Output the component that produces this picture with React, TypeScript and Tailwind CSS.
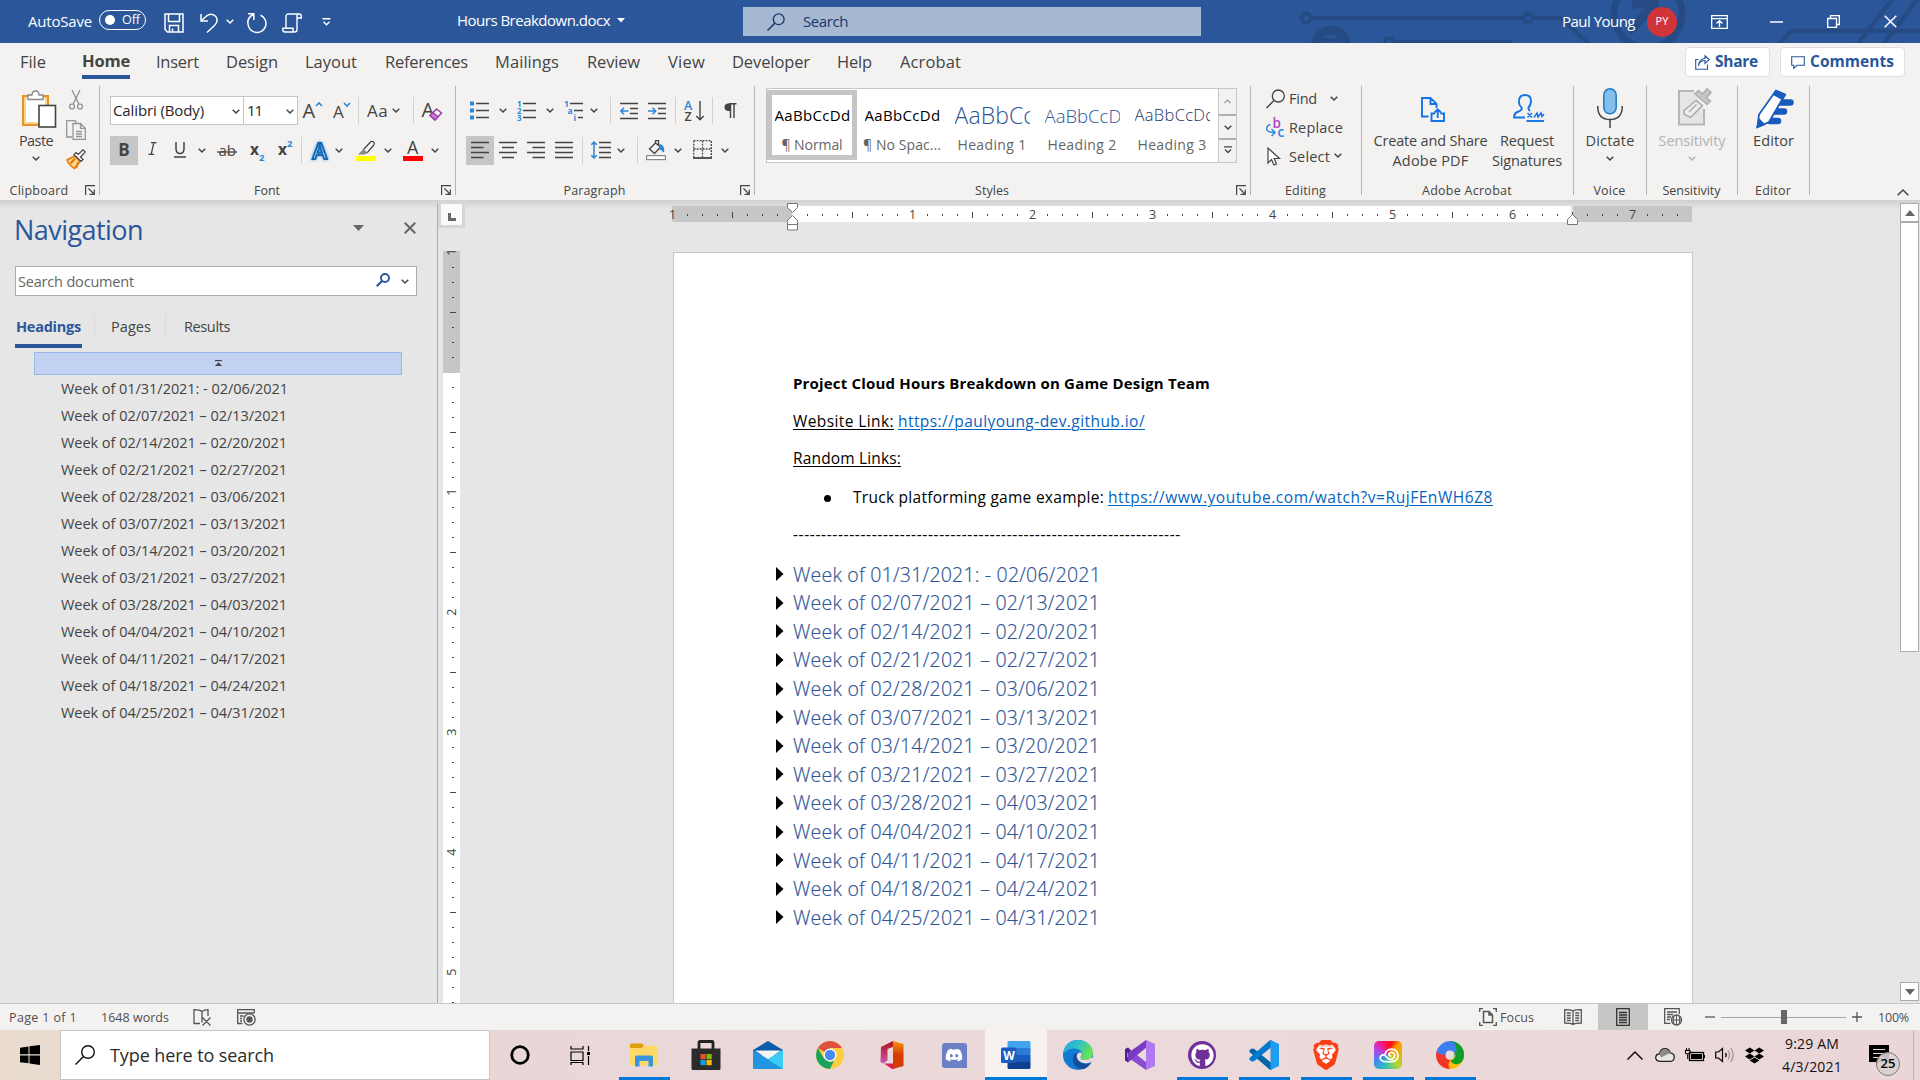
import React, { useLayoutEffect, useRef } from "react";
import { FaDiscord, FaDropbox, FaGithub } from "react-icons/fa";
import { SiBrave } from "react-icons/si";

/** Single-line text whose tracking is adjusted so that it fills `w` pixels. */
function T({ w, className = "", children }: { w: number; className?: string; children: string }) {
  const ref = useRef<HTMLSpanElement>(null);
  useLayoutEffect(() => {
    const el = ref.current;
    if (!el) return;
    el.style.letterSpacing = "0px";
    const natural = el.getBoundingClientRect().width;
    el.style.letterSpacing = `${(w - natural) / children.length}px`;
  }, [w, children]);
  return (
    <span ref={ref} className={`inline-block shrink-0 whitespace-pre ${className}`}>
      {children}
    </span>
  );
}

function Ic({
  w,
  h,
  className = "",
  children,
}: {
  w: number;
  h: number;
  className?: string;
  children: React.ReactNode;
}) {
  return (
    <svg
      width={w}
      height={h}
      viewBox={`0 0 ${w} ${h}`}
      fill="none"
      stroke="#444444"
      strokeWidth="1.3"
      className={`block shrink-0 overflow-visible ${className}`}
    >
      {children}
    </svg>
  );
}

const Chev = ({ className = "", color = "#444444" }: { className?: string; color?: string }) => (
  <Ic w={8} h={5} className={className}>
    <path d="M0.7 0.7L4 4L7.3 0.7" stroke={color} strokeWidth="1.5" />
  </Ic>
);

const Sep = () => <div className="h-[27px] w-px shrink-0 bg-[#d2d0ce]" />;

const Cell = ({ className = "", children }: { className?: string; children?: React.ReactNode }) => (
  <div className={`flex h-full shrink-0 items-center ${className}`}>{children}</div>
);

/* ---------- Title bar ---------- */

function Circuit() {
  return (
    <svg width="680" height="43" viewBox="1240 0 680 43" className="absolute right-0 top-0" fill="none" stroke="#264b84" strokeWidth="4">
      <circle cx="1306" cy="18" r="4.5" />
      <circle cx="1528" cy="18" r="4.5" />
      <path d="M1311 18H1523M1533 18H1560L1591 45" />
      <path d="M1316 45a15 15 0 0 1 30 0" strokeWidth="9" />
      <path d="M1322 40h18" strokeWidth="4" />
      <circle cx="1389" cy="42" r="4" />
      <path d="M1393 42H1512" />
      <circle cx="1648" cy="14" r="34" strokeWidth="7" />
      <path d="M1628 32L1652 8M1632 4h22v16" strokeWidth="9" />
      <path d="M1778 45L1791 31H1920M1857 45L1893 -2M1883 45L1918 -2" strokeWidth="4.5" />
    </svg>
  );
}

function TitleBar() {
  return (
    <header className="relative flex h-[43px] shrink-0 items-center overflow-hidden bg-[#2b579a] text-white">
      <Circuit />
      <div className="relative flex h-full w-full items-center">
        <Cell className="w-[99px] pl-7">
          <T w={64} className="text-[15px]">AutoSave</T>
        </Cell>
        <div className="mb-[3px] flex h-5 w-[47px] shrink-0 items-center rounded-full border border-white pl-[5px]">
          <div className="h-[10px] w-[10px] rounded-full bg-white" />
          <T w={18} className="ml-[7px] text-[12.5px]">Off</T>
        </div>
        <Ic w={20} h={20} className="ml-[18px] mt-[3px]">
          <path d="M1 1H19V19H3.5L1 16.5ZM4.5 1V8.5H15.5V1M5.5 19V12.5H14.5V19M8.5 15.5V19" stroke="#fff" strokeWidth="1.5" />
        </Ic>
        <Ic w={18} h={20} className="ml-4 mt-[3px]">
          <path d="M1 1V8H8M1.5 7.5L6.5 3C11 -0.8 17.5 2 17 8C16.8 10 16 11 14.5 12.5L7 19.5" stroke="#fff" strokeWidth="1.5" />
        </Ic>
        <Chev className="ml-2" color="#fff" />
        <Ic w={20} h={20} className="ml-[13px] mt-[3px]">
          <path d="M1 0.8H6.8V7M6.5 1.5C2 3.5 0.5 7.5 1 11A9 9 0 1 0 13.5 2.2" stroke="#fff" strokeWidth="1.5" />
        </Ic>
        <Ic w={20} h={20} className="ml-[15px] mt-[3px]">
          <path d="M4 15V3.5Q4 1 6.5 1H17Q19.3 1 19.3 3.3V5H15V16.5Q15 19 12.5 19H3Q0.8 19 0.8 16.5V15.3H11V17Q11 19 12.8 19M15 5V3Q15 1 17 1" stroke="#fff" strokeWidth="1.4" />
        </Ic>
        <Ic w={9} h={8} className="ml-[20px]">
          <path d="M0.5 0.8H8.5M1.5 3.8L4.5 6.8L7.5 3.8" stroke="#fff" strokeWidth="1.4" />
        </Ic>
        <T w={153} className="mb-[3px] ml-[126px] text-[15px]">Hours Breakdown.docx</T>
        <Ic w={8} h={5} className="mb-[3px] ml-[7px]">
          <path d="M0 0H8L4 4.5Z" fill="#fff" stroke="none" />
        </Ic>
        <div className="ml-[118px] flex h-[29px] w-[458px] shrink-0 items-center bg-[#a5b9d3] pl-6 text-[#1b3766]">
          <Ic w={18} h={18}>
            <circle cx="11.7" cy="6.3" r="5.4" stroke="#1b3766" />
            <path d="M7.8 10.2L0.5 17.5" stroke="#1b3766" strokeWidth="1.5" />
          </Ic>
          <T w={45} className="ml-[18px] text-[15px]">Search</T>
        </div>
        <T w={73} className="ml-[361px] text-[15px]">Paul Young</T>
        <div className="ml-[12px] flex h-[30px] w-[30px] shrink-0 items-center justify-center rounded-full bg-[#d13438] text-[11px]">PY</div>
        <Ic w={17} h={14} className="ml-[34px]">
          <path d="M0.7 0.7H16.3V13.3H0.7ZM0.7 3.7H16.3M8.5 12V6M5.5 8.5L8.5 5.7L11.5 8.5" stroke="#fff" />
        </Ic>
        <Ic w={13} h={2} className="ml-[42px]">
          <path d="M0 1H13" stroke="#fff" strokeWidth="1.5" />
        </Ic>
        <Ic w={13} h={13} className="ml-11">
          <path d="M0.7 3.5H9.5V12.3H0.7ZM3.5 3.5V0.7H12.3V9.5H9.5" stroke="#fff" />
        </Ic>
        <Ic w={13} h={13} className="ml-11">
          <path d="M0.7 0.7L12.3 12.3M12.3 0.7L0.7 12.3" stroke="#fff" strokeWidth="1.5" />
        </Ic>
      </div>
    </header>
  );
}

/* ---------- Ribbon tabs ---------- */

const tabs: { name: string; w: number; cell: string }[] = [
  { name: "File", w: 26, cell: "w-[62px]" },
  { name: "Home", w: 48, cell: "w-[74px]" },
  { name: "Insert", w: 43, cell: "w-[70px]" },
  { name: "Design", w: 52, cell: "w-[79px]" },
  { name: "Layout", w: 52, cell: "w-[80px]" },
  { name: "References", w: 83, cell: "w-[110px]" },
  { name: "Mailings", w: 64, cell: "w-[92px]" },
  { name: "Review", w: 53, cell: "w-[81px]" },
  { name: "View", w: 37, cell: "w-[64px]" },
  { name: "Developer", w: 78, cell: "w-[105px]" },
  { name: "Help", w: 35, cell: "w-[63px]" },
  { name: "Acrobat", w: 61, cell: "w-[90px]" },
];

function Tabs() {
  return (
    <nav className="flex h-10 shrink-0 pl-5 text-[#444444]">
      {tabs.map((t) => (
        <div key={t.name} className={`h-[39px] shrink-0 ${t.cell}`}>
          <div
            className={
              t.name === "Home"
                ? "flex h-9 w-12 items-center border-b-4 border-[#2b579a] pt-[5px] font-bold"
                : "flex h-9 items-center pt-0.5"
            }
          >
            <T w={t.w} className="text-[16.5px]">{t.name}</T>
          </div>
        </div>
      ))}
      <div className="ml-[695px] mt-1 flex h-[30px] w-[85px] shrink-0 items-center rounded-sm border border-[#e1dfdd] bg-white pl-[9px] font-bold text-[#2b579a]">
        <Ic w={15} h={15}>
          <path d="M3.5 4.5H0.7V14.3H12.5V9.5M3.5 11C4 7.5 6.5 5.5 10 5.5V8.5L14.3 4.5L10 0.8V3.5C6 3.5 3.5 7 3.5 11Z" stroke="#2b579a" strokeWidth="1.1" />
        </Ic>
        <T w={43} className="ml-[5px] text-[15.5px]">Share</T>
      </div>
      <div className="ml-[10px] mt-1 flex h-[30px] w-[125px] shrink-0 items-center rounded-sm border border-[#e1dfdd] bg-white pl-[10px] font-bold text-[#2b579a]">
        <Ic w={14} h={13}>
          <path d="M0.7 0.7H13.3V9.3H6L2.8 12.3V9.3H0.7Z" stroke="#2b579a" strokeWidth="1.1" />
        </Ic>
        <T w={84} className="ml-[5px] text-[15.5px]">Comments</T>
      </div>
    </nav>
  );
}

/* ---------- Ribbon groups ---------- */

function Group({
  label,
  lw,
  width,
  launcher = false,
  children,
}: {
  label: string;
  lw: number;
  width: string;
  launcher?: boolean;
  children: React.ReactNode;
}) {
  return (
    <section className={`h-[109px] shrink-0 border-r border-[#b7b5b3] ${width}`}>
      <div className="h-[95px]">{children}</div>
      <div className="flex h-[18px] items-center">
        <div className={launcher ? "flex flex-1 justify-center pr-[3px] pt-0.5" : "flex flex-1 justify-center pr-px pt-0.5"}>
          <T w={lw} className="text-[12.5px]">{label}</T>
        </div>
        {launcher && (
          <div className="w-[18px]">
            <Ic w={10} h={10} className="ml-1">
              <path d="M0.6 10V0.6H10M3.5 3.5L9 9M9.3 4.5V9.3H4.5" strokeWidth="1.2" />
            </Ic>
          </div>
        )}
      </div>
    </section>
  );
}

function Clipboard() {
  return (
    <Group label="Clipboard" lw={59} width="w-[100px]" launcher>
      <div className="flex">
        <div className="flex w-[63px] flex-col items-center pl-[9px] pt-1">
          <Ic w={34} h={38} className="ml-[6px]">
            <rect x="1" y="6" width="25" height="29" fill="#fff" stroke="#e8912d" strokeWidth="2" />
            <rect x="3" y="8" width="21" height="25" stroke="#fbd68c" strokeWidth="2" />
            <path d="M6 9.5V5H10Q10 1 13.5 1Q17 1 17 5H21V9.5Z" fill="#fff" stroke="#8a8886" />
            <rect x="17" y="15.500" width="16.500" height="21.500" fill="#fff" stroke="#444" strokeWidth="1.6" />
          </Ic>
          <T w={34} className="mt-[3px] text-[14.5px] leading-5">Paste</T>
          <Chev className="mt-[5px]" />
        </div>
        <div className="flex flex-col items-center pl-[3px] pt-1">
          <Ic w={14} h={20}>
            <g stroke="#8a8886" strokeWidth="1.2">
              <path d="M3 0L9.800 14M11 0L4.200 14" />
              <circle cx="3" cy="16.500" r="2.500" />
              <circle cx="11" cy="16.500" r="2.500" />
            </g>
          </Ic>
          <Ic w={20} h={20} className="mt-[10px]">
            <g stroke="#979593" strokeWidth="1.3">
              <path d="M6 17H0.700V0.700H9L10.500 2.500" />
              <path d="M7 3.500H14.500L19.300 8.300V19.300H7ZM14.500 3.500V8.300H19.300M10 11.500H16M10 14H16M10 16.500H16" />
            </g>
          </Ic>
          <Ic w={20} h={20} className="mt-[9px]">
            <path d="M1 11L8.500 7L14 12.500L8.500 19.500Q3 16.500 1 11Z" fill="#fbd68c" stroke="#e07a10" strokeWidth="1.500" />
            <path d="M4.500 14.500L9 9.500M10 19L12.500 13" stroke="#e07a10" strokeWidth="2.200" />
            <path d="M8 5.500L15 12.500L17 10.500L14.500 8L19.300 3L17 0.800L12.200 5.500L10 3.500Z" fill="#fff" stroke="#444" strokeWidth="1.200" />
          </Ic>
        </div>
      </div>
    </Group>
  );
}

const glyph = { fontFamily: "Open Sans, sans-serif", stroke: "none", fill: "#444444" };

function FontGroup() {
  return (
    <Group label="Font" lw={26} width="w-[356px]" launcher>
      <div className="flex flex-col gap-[11px] pl-[10px] pt-[10px]">
        <div className="flex h-[29px] items-center">
          <div className="flex h-[29px] w-[134px] shrink-0 items-center border border-[#c8c6c4] bg-white pl-[2px] text-[#262626]">
            <T w={91} className="text-[15px]">Calibri (Body)</T>
            <Chev className="ml-[28px] mt-0.5" />
          </div>
          <div className="flex h-[29px] w-[54px] shrink-0 items-center border border-l-0 border-[#c8c6c4] bg-white pl-[3px] text-[#262626]">
            <T w={15} className="text-[15px]">11</T>
            <Chev className="ml-[24px] mt-0.5" />
          </div>
          <Cell className="w-[33px] pl-[5px]">
            <Ic w={20} h={20}>
              <text x="-0.500" y="17" fontSize="20" {...glyph}>A</text>
              <path d="M13 5L16 2L19 5" stroke="#2b88d8" strokeWidth="1.600" />
            </Ic>
          </Cell>
          <Cell className="w-[27px] pl-[2px]">
            <Ic w={18} h={20}>
              <text x="0" y="17" fontSize="17" {...glyph}>A</text>
              <path d="M11 2L14 5L17 2" stroke="#2b88d8" strokeWidth="1.600" />
            </Ic>
          </Cell>
          <Sep />
          <Cell className="w-[54px] pl-[8px]">
            <T w={21} className="text-[17px]">Aa</T>
            <Chev className="ml-[4px]" />
          </Cell>
          <Sep />
          <Cell className="pl-2">
            <Ic w={20} h={20}>
              <text x="-0.500" y="16" fontSize="20" {...glyph}>A</text>
              <path d="M8 14.500L14.500 8L19.500 12L13 19Z" fill="#f3f2f1" stroke="#9b3fa8" strokeWidth="1.500" />
              <path d="M8 14.500L11 11.500L16 15.800L13 19Z" fill="#c27fd0" stroke="#9b3fa8" />
            </Ic>
          </Cell>
        </div>
        <div className="flex h-[29px] items-center">
          <Cell className="w-7 justify-center bg-[#c8c6c4] pb-0.5 text-[17px] font-bold">B</Cell>
          <Cell className="w-7 justify-center">
            <Ic w={9} h={13} className="mb-1">
              <path d="M3 0.700H8.500M0.500 12.300H6M5.800 0.700L3.200 12.300" strokeWidth="1.300" />
            </Ic>
          </Cell>
          <Cell className="w-7 justify-center">
            <Ic w={12} h={16} className="-mt-0.5">
              <path d="M2 0V6.500Q2 11.500 6 11.500Q10 11.500 10 6.500V0M0 15H12" strokeWidth="1.500" />
            </Ic>
          </Cell>
          <Cell className="w-[19px] pl-[4px]"><Chev /></Cell>
          <Cell className="w-[34px] pl-[4px]">
            <Ic w={20} h={16}>
              <text x="1.500" y="13" fontSize="15" {...glyph}>ab</text>
              <path d="M0 9H20" />
            </Ic>
          </Cell>
          <Cell className="w-7 pl-[3px]">
            <Ic w={14} h={20}>
              <text x="0" y="14" fontSize="15.500" fontWeight="700" {...glyph}>x</text>
              <text x="9" y="20" fontSize="9.500" fontWeight="700" {...glyph} fill="#2b88d8">2</text>
            </Ic>
          </Cell>
          <Cell className="w-[26px] pl-[3px]">
            <Ic w={14} h={20}>
              <text x="0" y="14" fontSize="15.500" fontWeight="700" {...glyph}>x</text>
              <text x="9" y="6" fontSize="9.500" fontWeight="700" {...glyph} fill="#2b88d8">2</text>
            </Ic>
          </Cell>
          <Sep />
          <Cell className="w-[33px] pl-[8px]">
            <Ic w={20} h={20} className="drop-shadow-[0_0_1.5px_#4fa8ea]">
              <text x="2.500" y="17.500" fontSize="22" fontFamily="Open Sans" fontWeight="600" fill="#e8f3fb" stroke="#1268b3" strokeWidth="2">A</text>
            </Ic>
          </Cell>
          <Cell className="w-[20px]"><Chev /></Cell>
          <Cell className="w-[29px] pl-[1px]">
            <Ic w={20} h={20}>
              <rect x="0" y="15" width="20" height="5" fill="#ffff00" stroke="none" />
              <path d="M7.500 8.500L14.500 1Q16 -0.300 17.800 1Q19 2.500 17.800 4L11.500 11.500L7 12Z" fill="#f3f2f1" strokeWidth="1.200" />
              <path d="M7.500 8L11.500 12L8.500 13.500H2Z" fill="#8a8886" stroke="none" />
            </Ic>
          </Cell>
          <Cell className="w-[19px]"><Chev /></Cell>
          <Cell className="w-[28px]">
            <Ic w={20} h={20}>
              <rect x="0" y="15" width="20" height="5" fill="#ff0000" stroke="none" />
              <text x="4" y="13" fontSize="18" {...glyph}>A</text>
            </Ic>
          </Cell>
          <Cell><Chev /></Cell>
        </div>
      </div>
    </Group>
  );
}

function ParagraphGroup() {
  return (
    <Group label="Paragraph" lw={62} width="w-[299px]" launcher>
      <div className="flex flex-col gap-[11px] pl-[10px] pt-[10px]">
        <div className="flex h-[29px] items-center">
          <Cell className="w-[33px] pl-[4px]">
            <Ic w={19} h={19}>
              <path d="M6 2.500H19M6 9.500H19M6 16.500H19" strokeWidth="1.500" />
              <path d="M0 0.500h4v4h-4zM0 7.500h4v4h-4zM0 14.500h4v4h-4z" fill="#2b88d8" stroke="none" />
            </Ic>
          </Cell>
          <Cell className="w-[18px]"><Chev /></Cell>
          <Cell className="w-[29px]">
            <Ic w={19} h={19}>
              <path d="M6 2.500H19M6 9.500H19M6 16.500H19" strokeWidth="1.500" />
              <g fontSize="8" fontWeight="700" fontFamily="Open Sans" fill="#2b88d8" stroke="none">
                <text x="0" y="5.500">1</text><text x="0" y="12.500">2</text><text x="0" y="19.500">3</text>
              </g>
            </Ic>
          </Cell>
          <Cell className="w-[18px]"><Chev /></Cell>
          <Cell className="w-[26px]">
            <Ic w={19} h={19}>
              <path d="M6 2.500H19M10 9.500H19M14 16.500H19" strokeWidth="1.500" />
              <g fontSize="8.500" fontWeight="700" fontFamily="Open Sans" fill="#2b88d8" stroke="none">
                <text x="0" y="5.500">1</text><text x="3.500" y="12.500">a</text><text x="9.500" y="19.500">i</text>
              </g>
            </Ic>
          </Cell>
          <Cell className="w-[20px]"><Chev /></Cell>
          <Sep />
          <Cell className="w-[37px] pl-[9px]">
            <Ic w={18} h={18}>
              <path d="M0 1.500H18M10 6.500H18M10 11.500H18M0 16.500H18" strokeWidth="1.500" />
              <path d="M8.500 9H1M4 5.800L0.800 9L4 12.200" stroke="#2b88d8" strokeWidth="1.500" />
            </Ic>
          </Cell>
          <Cell className="w-[27px]">
            <Ic w={18} h={18}>
              <path d="M0 1.500H18M10 6.500H18M10 11.500H18M0 16.500H18" strokeWidth="1.500" />
              <path d="M0 9H7.500M4.500 5.800L7.700 9L4.500 12.200" stroke="#2b88d8" strokeWidth="1.500" />
            </Ic>
          </Cell>
          <Sep />
          <Cell className="w-[36px] pl-[8px]">
            <Ic w={20} h={20}>
              <g fontSize="12.500" fontWeight="600" fontFamily="Open Sans" stroke="none">
                <text x="0" y="9" fill="#2b88d8">A</text><text x="0.500" y="19.500" fill="#444">Z</text>
              </g>
              <path d="M16 0V18.500M12.300 15L16 18.800L19.700 15" strokeWidth="1.400" />
            </Ic>
          </Cell>
          <Sep />
          <Cell className="pl-[11px]">
            <Ic w={13} h={15}>
              <path d="M12.500 0.700H5M6.500 0.700V15M10 0.700V15" strokeWidth="1.400" />
              <path d="M6.500 0.500H4.500Q0.500 0.800 0.500 4.300Q0.500 7.800 4.500 8H6.500Z" fill="#444" stroke="none" />
            </Ic>
          </Cell>
        </div>
        <div className="flex h-[29px] items-center">
          <Cell className="w-7 justify-center bg-[#c8c6c4]">
            <Ic w={18} h={18} className="-mt-0.5"><path d="M0 1.500H18M0 6.500H12.500M0 11.500H18M0 16.500H12.500" strokeWidth="1.500" /></Ic>
          </Cell>
          <Cell className="w-7 justify-center">
            <Ic w={18} h={18} className="-mt-0.5"><path d="M0 1.500H18M3 6.500H15M0 11.500H18M3 16.500H15" strokeWidth="1.500" /></Ic>
          </Cell>
          <Cell className="w-7 justify-center">
            <Ic w={18} h={18} className="-mt-0.5"><path d="M0 1.500H18M5.500 6.500H18M0 11.500H18M5.500 16.500H18" strokeWidth="1.500" /></Ic>
          </Cell>
          <Cell className="w-8 pl-[5px]">
            <Ic w={18} h={18} className="-mt-0.5"><path d="M0 1.500H18M0 6.500H18M0 11.500H18M0 16.500H18" strokeWidth="1.500" /></Ic>
          </Cell>
          <Sep />
          <Cell className="w-[34px] pl-[8px]">
            <Ic w={20} h={18} className="-mt-0.5">
              <path d="M8 1.500H20M8 6.500H20M8 11.500H20M8 16.500H20" strokeWidth="1.500" />
              <path d="M3 1V17M0.300 3.800L3 1L5.700 3.800M0.300 14.200L3 17L5.700 14.200" stroke="#2b88d8" strokeWidth="1.500" />
            </Ic>
          </Cell>
          <Cell className="w-[20px]"><Chev /></Cell>
          <Sep />
          <Cell className="w-[36px] pl-[8px]">
            <Ic w={20} h={20} className="-mt-0.5">
              <rect x="0.600" y="15.600" width="18.800" height="4" fill="#fff" stroke="#8a8886" strokeWidth="1.200" />
              <path d="M9.500 3L3.500 9L8.500 13.500L14.500 7L9.500 3V0.700H12.500V6" />
              <path d="M14 4.500Q18.500 6 17.500 12Q17 9.500 14 9Z" fill="#2b88d8" stroke="#2b88d8" />
            </Ic>
          </Cell>
          <Cell className="w-[19px]"><Chev /></Cell>
          <Cell className="w-[28px]">
            <Ic w={19} h={19} className="-mt-0.5">
              <path d="M0.700 0.700H18.300V17M0.700 0.700V17M9.500 0.700V17M0.700 9H18.300" strokeDasharray="1.800 1.200" />
              <path d="M0 18H19" strokeWidth="1.800" />
            </Ic>
          </Cell>
          <Cell><Chev /></Cell>
        </div>
      </div>
    </Group>
  );
}

const styleItems = [
  { sample: "AaBbCcDd", name: "¶ Normal", sw: 76, nw: 61, cls: "text-[15px] text-black" },
  { sample: "AaBbCcDd", name: "¶ No Spac...", sw: 76, nw: 78, cls: "text-[15px] text-black" },
  { sample: "AaBbCcDd", name: "Heading 1", sw: 110, nw: 69, cls: "font-light text-[23px] text-[#2f5496]" },
  { sample: "AaBbCcDd", name: "Heading 2", sw: 88, nw: 69, cls: "font-light text-[18.5px] text-[#2f5496]" },
  { sample: "AaBbCcDd", name: "Heading 3", sw: 81, nw: 69, cls: "font-light text-[16.5px] text-[#1f3763]" },
];

function StylesGroup() {
  return (
    <Group label="Styles" lw={34} width="w-[496px]" launcher>
      <div className="pl-[11px] pt-[2px]">
        <div className="flex h-[75px] w-[471px] border border-[#c8c6c4] bg-white">
          <div className="flex w-[451px] pt-px">
            {styleItems.map((s, i) => (
              <div
                key={s.name}
                className={`flex h-[70px] w-[90px] shrink-0 flex-col items-center border-[5px] ${
                  i === 0 ? "border-[#c5c5c5]" : "border-transparent"
                }`}
              >
                <div className="mt-1 flex h-[35px] w-[75px] items-center overflow-hidden">
                  <T w={s.sw} className={s.cls}>{s.sample}</T>
                </div>
                <T w={s.nw} className="mt-[3px] text-[14px] leading-5 text-[#666666]">{s.name}</T>
              </div>
            ))}
          </div>
          <div className="flex w-[18px] flex-col border-l border-[#c8c6c4] bg-[#f3f2f1]">
            <div className="flex h-[25px] items-center justify-center">
              <Ic w={7} h={5}><path d="M0.500 4L3.500 1L6.500 4" stroke="#a19f9d" /></Ic>
            </div>
            <div className="flex h-[24px] items-center justify-center border-t-2 border-[#b0aeac]">
              <Chev />
            </div>
            <div className="flex h-[24px] items-center justify-center border-t-2 border-[#b0aeac]">
              <Ic w={8} h={8} className="-mt-0.5"><path d="M0 0.800H8M1 3.500L4 6.500L7 3.500" /></Ic>
            </div>
          </div>
        </div>
      </div>
    </Group>
  );
}

function EditingGroup() {
  return (
    <Group label="Editing" lw={41} width="w-[111px]">
      <div className="pl-[15px] text-[14.5px]">
        <div className="flex h-[25px] items-center">
          <Ic w={19} h={20}>
            <circle cx="12.300" cy="7" r="6" />
            <path d="M8 11.500L0.500 19" strokeWidth="1.500" />
          </Ic>
          <T w={28} className="ml-[4px]">Find</T>
          <Chev className="ml-[13px]" />
        </div>
        <div className="mt-[5px] flex h-[24px] items-center">
          <Ic w={19} h={20}>
            <g fontSize="13.500" fontWeight="600" fontFamily="Open Sans" stroke="none">
              <text x="6.500" y="9.500" fill="#b146c2">b</text>
              <text x="11.500" y="19" fill="#2b88d8">c</text>
            </g>
            <path d="M4.500 6.500Q0.500 7.500 0.700 11Q1 14.500 8.500 14.500M5.500 11L9 14.500L5.500 18" stroke="#2b88d8" strokeWidth="1.500" />
          </Ic>
          <T w={54} className="ml-[4px]">Replace</T>
        </div>
        <div className="mt-[5px] flex h-[24px] items-center">
          <Ic w={19} h={20}>
            <path d="M2 1V16L5.500 12.500L8 18L10.500 17L8.200 11.500H13.500Z" strokeWidth="1.200" fill="#fff" />
          </Ic>
          <T w={41} className="ml-[4px]">Select</T>
          <Chev className="mb-[3px] ml-[4px]" />
        </div>
      </div>
    </Group>
  );
}

function AcrobatGroup() {
  return (
    <Group label="Adobe Acrobat" lw={90} width="w-[212px]">
      <div className="flex text-[14.5px] leading-5">
        <div className="flex w-[137px] flex-col items-center pt-[11px]">
          <Ic w={24} h={25} className="ml-1">
            <g stroke="#1473e6" strokeWidth="1.900">
              <path d="M7.500 19.500H1V1H9.500L15.500 7V11M9.500 1V7H15.500" />
              <path d="M14 16.500H10.500V24H23V16.500H19.500M16.700 21V12.500M13.500 15.500L16.700 12.300L20 15.500" />
            </g>
          </Ic>
          <T w={114} className="mt-[9px]">Create and Share</T>
          <T w={76}>Adobe PDF</T>
        </div>
        <div className="flex w-[56px] flex-col items-center pt-[8px]">
          <Ic w={31} h={28} className="ml-[2px]">
            <g stroke="#1473e6" strokeWidth="1.900">
              <path d="M12 23.500H1Q1 19 5.500 17.500Q9.500 16 8.500 13.500Q5.500 11 6 6.500Q6.500 1 12 1Q17.500 1 18 6.500Q18 11 15.500 13.500Q15 15.500 17 17" />
              <path d="M13.500 27H31" />
              <path d="M14.500 19L19 23.500M19 19L14.500 23.500M21 23.500L24 19L25 23L28 19L29 22.500L31 20" strokeWidth="1.500" />
            </g>
          </Ic>
          <T w={54} className="mt-[9px]">Request</T>
          <T w={70}>Signatures</T>
        </div>
      </div>
    </Group>
  );
}

function VoiceGroup() {
  return (
    <Group label="Voice" lw={32} width="w-[73px]">
      <div className="flex flex-col items-center pt-[2px] text-[14.5px] leading-5">
        <Ic w={26} h={40}>
          <rect x="6.800" y="0.800" width="12.400" height="25" rx="6.200" fill="#83beec" stroke="#1e7bc4" strokeWidth="1.500" />
          <path d="M0.800 18V20Q1.500 31.500 13 31.500Q24.500 31.500 25.200 20V18M13 31.500V40" strokeWidth="1.500" />
        </Ic>
        <T w={49} className="mt-[3px]">Dictate</T>
        <Chev className="mt-[5px]" />
      </div>
    </Group>
  );
}

function SensitivityGroup() {
  return (
    <Group label="Sensitivity" lw={58} width="w-[91px]">
      <div className="flex flex-col items-center pt-[2px] text-[14.500px] leading-5 text-[#b1b1b1]">
        <Ic w={34} h={40} className="ml-[5px]">
          <path d="M26 21V36.500H1V3H16" fill="#e6e5e4" stroke="#b8b6b4" strokeWidth="2" />
          <g fill="#ececec" stroke="#b1afad" strokeWidth="1.600">
            <path d="M18 12.500L24.500 17.500L12.500 29.500L6 26V22.500Z" />
            <path d="M11 24L18.500 16.500" />
            <path d="M17 6L20.500 2.500L24.500 6L29 0.800L33 4.500L28.500 9.500L32.500 13L29 16.500Z" fill="#c8c6c4" />
          </g>
        </Ic>
        <T w={67} className="mt-[3px]">Sensitivity</T>
        <Chev className="mt-[5px]" color="#b1b1b1" />
      </div>
    </Group>
  );
}

function EditorGroup() {
  return (
    <Group label="Editor" lw={36} width="w-[72px]">
      <div className="flex flex-col items-center pt-[3px] text-[14.500px] leading-5">
        <Ic w={38} h={39} className="ml-0.5">
          <g stroke="#185abd">
            <path d="M23 13.500H34.500M19.500 22.500H28M14 32H22" strokeWidth="6.500" strokeLinecap="round" />
            <path d="M20 1.500L29 5.500L13 33L1.500 38L3 25.500Z" fill="#fff" strokeWidth="1.800" />
            <path d="M19.500 2L29 6.500L26.500 10.500L17.500 5.500Z" fill="#185abd" />
            <path d="M1 38.500L3 30L8.500 35.500Z" fill="#185abd" />
          </g>
        </Ic>
        <T w={41} className="mt-[3px]">Editor</T>
      </div>
    </Group>
  );
}

function Ribbon() {
  return (
    <div className="flex h-[117px] shrink-0 pt-[3px] text-[#444444]">
      <Clipboard />
      <FontGroup />
      <ParagraphGroup />
      <StylesGroup />
      <EditingGroup />
      <AcrobatGroup />
      <VoiceGroup />
      <SensitivityGroup />
      <EditorGroup />
      <Ic w={12} h={7} className="ml-[87px] mt-[103px]">
        <path d="M0.700 6.300L6 1L11.300 6.300" strokeWidth="1.500" />
      </Ic>
    </div>
  );
}

/* ---------- Navigation pane ---------- */

const weeks = [
  "Week of 01/31/2021: - 02/06/2021",
  "Week of 02/07/2021 – 02/13/2021",
  "Week of 02/14/2021 – 02/20/2021",
  "Week of 02/21/2021 – 02/27/2021",
  "Week of 02/28/2021 – 03/06/2021",
  "Week of 03/07/2021 – 03/13/2021",
  "Week of 03/14/2021 – 03/20/2021",
  "Week of 03/21/2021 – 03/27/2021",
  "Week of 03/28/2021 – 04/03/2021",
  "Week of 04/04/2021 – 04/10/2021",
  "Week of 04/11/2021 – 04/17/2021",
  "Week of 04/18/2021 – 04/24/2021",
  "Week of 04/25/2021 – 04/31/2021",
];

function NavigationPane() {
  return (
    <aside className="mt-[3px] w-[438px] shrink-0 border-r border-[#ababab] text-[#444444]">
      <div className="flex h-[54px] items-center pl-[14px]">
        <div className="w-[339px] pt-px">
          <T w={129} className="text-[27px] text-[#2b579a]">Navigation</T>
        </div>
        <Ic w={11} h={6} className="mb-1">
          <path d="M0 0H11L5.500 6Z" fill="#666" stroke="none" />
        </Ic>
        <Ic w={12} h={12} className="mb-1 ml-10">
          <path d="M0.700 0.700L11.300 11.300M11.300 0.700L0.700 11.300" stroke="#666" strokeWidth="2" />
        </Ic>
      </div>
      <div className="ml-[15px] mt-[9px] flex h-[30px] w-[402px] items-center border border-[#ababab] bg-white pl-[2px] text-[#666666]">
        <div className="w-[358px]">
          <T w={116} className="text-[14.500px]">Search document</T>
        </div>
        <Ic w={14} h={14} className="mb-0.5">
          <circle cx="9" cy="5" r="4" stroke="#2b579a" strokeWidth="1.900" />
          <path d="M6 8L0.800 13.200" stroke="#2b579a" strokeWidth="2.200" />
        </Ic>
        <Chev className="ml-[11px]" />
      </div>
      <div className="flex h-[52px] pl-[15px]">
        <div className="flex w-[67px] items-center border-b-4 border-[#2b579a] pl-px pt-[13px] font-bold text-[#2b579a]">
          <T w={65} className="text-[14.500px]">Headings</T>
        </div>
        <div className="ml-3 mt-[17px] h-[26px] w-px bg-[#dcdcdc]" />
        <div className="ml-[16px] flex h-12 w-[54px] items-center pt-[13px]">
          <T w={40} className="text-[14.500px]">Pages</T>
        </div>
        <div className="mt-[17px] h-[26px] w-px bg-[#dcdcdc]" />
        <div className="ml-[18px] flex h-12 items-center pt-[13px]">
          <T w={46} className="text-[14.500px]">Results</T>
        </div>
      </div>
      <div className="ml-[34px] mt-1 flex h-[23px] w-[368px] items-center justify-center border border-[#9ab8e6] bg-[#c1d3f1]">
        <Ic w={7} h={6} className="mb-0.5">
          <path d="M0 0.600H7" stroke="#444" strokeWidth="1.200" />
          <path d="M0 6L3.500 2.200L7 6Z" fill="#444" stroke="none" />
        </Ic>
      </div>
      <ul>
        {weeks.map((w, i) => (
          <li key={w} className="flex h-[27px] items-center pl-[61px]">
            <T w={i === 0 ? 227 : 226} className="text-[14.500px]">{w}</T>
          </li>
        ))}
      </ul>
    </aside>
  );
}

/* ---------- Rulers ---------- */

function mark(i: number) {
  if (i % 8 === 0) return "number";
  if (i % 4 === 0) return "half";
  return "eighth";
}

function VerticalRuler() {
  const marks = Array.from({ length: 51 }, (_, k) => k - 8);
  return (
    <div className="w-[27px] shrink-0">
      <div className="mt-px flex h-[27px] w-[27px] items-center justify-center bg-[#d6d6d6]">
        <div className="flex h-[21px] w-[21px] items-end justify-center bg-[#fafafa] pb-1">
          <Ic w={8} h={8}>
            <path d="M1.500 0V6.500H8" stroke="#666" strokeWidth="3" />
          </Ic>
        </div>
      </div>
      <div className="relative ml-[5px] mt-[23px] h-[752px] w-[17px] overflow-hidden bg-white">
        <div className="h-[122px] bg-[#c6c6c6]" />
        <div className="absolute left-0.5 right-0 top-[-6px] flex flex-col">
          {marks.map((i) => (
            <div key={i} className="flex h-[15px] shrink-0 items-center justify-center text-[12.500px] leading-none text-[#444]">
              {i === 0 ? null : mark(i) === "number" ? (
                <span className="-rotate-90">{Math.abs(i / 8)}</span>
              ) : mark(i) === "half" ? (
                <div className="h-px w-[6px] bg-[#444]" />
              ) : (
                <div className="h-px w-0.5 bg-[#444]" />
              )}
            </div>
          ))}
        </div>
      </div>
    </div>
  );
}

function HorizontalRuler() {
  const marks = Array.from({ length: 68 }, (_, k) => k - 8);
  return (
    <div className="relative ml-[207px] mt-[6px] h-4 w-[1020px]">
      <div className="flex h-4">
        <div className="w-[120px] bg-[#c6c6c6]" />
        <div className="w-[779px] bg-white" />
        <div className="ml-0.5 flex-1 bg-[#c6c6c6]" />
      </div>
      <div className="absolute left-[-7px] top-px flex h-4">
        {marks.map((i) => (
          <div key={i} className="flex w-[15px] shrink-0 items-center justify-center text-[12.500px] leading-none text-[#444]">
            {i === 0 || i === 60 ? null : mark(i) === "number" ? (
              Math.abs(i / 8)
            ) : mark(i) === "half" ? (
              <div className="h-[6px] w-px bg-[#444]" />
            ) : (
              <div className="h-0.5 w-px bg-[#444]" />
            )}
          </div>
        ))}
      </div>
      <svg width="12" height="28" viewBox="0 0 12 28" fill="#fff" stroke="#777" className="absolute left-[115px] top-[-3px]">
        <path d="M0.500 0.500H10.500V4.500L5.500 9.500L0.500 4.500ZM0.500 21.500V17.500L5.500 12.500L10.500 17.500V21.500ZM0.500 21.500H10.500V27H0.500Z" />
      </svg>
      <svg width="12" height="12" viewBox="0 0 12 12" fill="#fff" stroke="#777" className="absolute left-[895px] top-[8px]">
        <path d="M0.500 10.500V5.500L5.500 0.500L10.500 5.500V10.500Z" />
      </svg>
    </div>
  );
}

/* ---------- Document ---------- */

function Page() {
  return (
    <article className="ml-[208px] mt-[30px] h-[752px] w-[1020px] border border-b-0 border-[#c6c6c6] bg-white pl-[119px] pt-[112px] text-[15.500px] text-black">
      <p className="flex h-[37px] items-center font-bold">
        <T w={417} className="text-[15px]">Project Cloud Hours Breakdown on Game Design Team</T>
      </p>
      <p className="flex h-[37px] items-center pt-0.5">
        <T w={101} className="underline decoration-1 underline-offset-2">Website Link:</T>
        <T w={247} className="ml-[4px] text-[#0563c1] underline decoration-1 underline-offset-2">https://paulyoung-dev.github.io/</T>
      </p>
      <p className="flex h-[37px] items-center pt-0.5">
        <T w={108} className="underline decoration-1 underline-offset-2">Random Links:</T>
      </p>
      <div className="flex h-[43px] items-center pl-[31px] pt-px">
        <div className="mr-[22px] h-[7px] w-[7px] rounded-full bg-black" />
        <T w={251}>Truck platforming game example:</T>
        <T w={385} className="ml-[4px] text-[#0563c1] underline decoration-1 underline-offset-2">https://www.youtube.com/watch?v=RujFEnWH6Z8</T>
      </div>
      <p className="flex h-[32px] items-center">
        <T w={388}>---------------------------------------------------------------------</T>
      </p>
      <div className="mt-[9px]">
        {weeks.map((w, i) => (
          <h2 key={w} className="-ml-[17px] flex h-[28.600px] items-center text-[19.500px] font-light text-[#2f5496] [-webkit-text-stroke:0.2px_#2f5496]">
            <Ic w={8} h={14} className="mr-[9px]">
              <path d="M0 0L7.500 7L0 14Z" fill="#000" stroke="none" />
            </Ic>
            <T w={i === 0 ? 308 : 307}>{w}</T>
          </h2>
        ))}
      </div>
    </article>
  );
}

function ScrollBar() {
  return (
    <div className="flex w-5 shrink-0 flex-col pt-[3px]">
      <div className="flex h-[19px] w-[19px] items-center justify-center border border-[#ababab] bg-white">
        <Ic w={10} h={6}><path d="M0 6L5 0L10 6Z" fill="#666" stroke="none" /></Ic>
      </div>
      <div className="h-[430px] w-[19px] border border-[#ababab] bg-white" />
      <div className="mt-[330px] flex h-[19px] w-[19px] items-center justify-center border border-[#ababab] bg-white">
        <Ic w={10} h={6}><path d="M0 0L5 6L10 0Z" fill="#666" stroke="none" /></Ic>
      </div>
    </div>
  );
}

/* ---------- Status bar ---------- */

function StatusBar() {
  return (
    <footer className="flex h-[27px] shrink-0 items-center border-t border-[#c6c6c6] bg-[#f3f2f1] text-[12.500px] text-[#505050]">
      <Cell className="w-[101px] pl-[9px] pt-0.5"><T w={68}>Page 1 of 1</T></Cell>
      <Cell className="w-[92px] pt-0.5"><T w={68}>1648 words</T></Cell>
      <Ic w={18} h={17}>
        <path d="M9 13.500V2.500Q7 0.700 1 0.700V14.500H7M9 2.500Q11 0.700 15 0.700V7M9.500 8.500L17.500 16.500M17.500 8.500L9.500 16.500" stroke="#555" />
      </Ic>
      <Ic w={19} h={17} className="ml-[26px]">
        <g stroke="#555">
          <path d="M5.500 14.500H0.700V0.700H17.300V4M0.700 4H17.300M3 7H6.500M3 9.500H5M3 12H5" />
          <circle cx="12.500" cy="10.500" r="5.600" />
          <circle cx="12.500" cy="10.500" r="2.500" fill="#555" />
        </g>
      </Ic>
      <Ic w={18} h={18} className="ml-[1223px]">
        <g stroke="#555">
          <path d="M0.700 4V0.700H4M14 0.700H17.300V4M17.300 14V17.300H14M4 17.300H0.700V14" />
          <path d="M4.500 3.500H10L13.500 7V14.500H4.500ZM10 3.500V7H13.500" strokeWidth="1.500" />
        </g>
      </Ic>
      <T w={34} className="ml-[3px] mt-0.5">Focus</T>
      <Ic w={18} h={16} className="ml-[30px]">
        <path d="M9 15.500V2Q7 0.700 0.700 0.700V14Q7 14 9 15.500Q11 14 17.300 14V0.700Q11 0.700 9 2M2.800 4H6.800M2.800 6.500H6.800M2.800 9H6.800M2.800 11.500H6.800M11.200 4H15.200M11.200 6.500H15.200M11.200 9H15.200M11.200 11.500H15.200" stroke="#555" />
      </Ic>
      <div className="ml-4 flex h-full w-[50px] shrink-0 items-center justify-center bg-[#c8c6c4]">
        <Ic w={14} h={18}>
          <path d="M0.700 0.700H13.300V17.300H0.700ZM3 4.500H11M3 7H11M3 9.500H11M3 12H11M3 14.500H11" stroke="#333" />
        </Ic>
      </div>
      <Ic w={18} h={18} className="ml-4">
        <g stroke="#555">
          <path d="M6.500 15.300H0.700V0.700H15.300V6M3 4H13M3 6.500H9M3 9H7M3 11.500H6" />
          <circle cx="12.500" cy="12" r="5" />
          <path d="M7.500 12H17.500M12.500 7V17M10 8Q8.500 12 10 16M15 8Q16.500 12 15 16" strokeWidth="1" />
        </g>
      </Ic>
      <Ic w={10} h={2} className="ml-[23px]"><path d="M0 1H10" stroke="#555" /></Ic>
      <div className="ml-[6px] flex w-[125px] shrink-0 items-center">
        <div className="h-px w-[60px] bg-[#a6a6a6]" />
        <div className="h-[14px] w-[6px] bg-[#666666]" />
        <div className="h-px flex-1 bg-[#a6a6a6]" />
      </div>
      <Ic w={10} h={10} className="ml-[6px]"><path d="M0 5H10M5 0V10" stroke="#555" /></Ic>
      <T w={31} className="ml-[16px] mt-0.5">100%</T>
    </footer>
  );
}

/* ---------- Taskbar ---------- */

const ExplorerIcon = () => (
  <Ic w={28} h={24}>
    <g stroke="none">
      <path d="M0 1.500Q0 0.500 1 0.500H12L14 2.500L12 5H0Z" fill="#e0a009" />
      <path d="M0 5H12L14.500 2.500H26.500Q27.500 2.500 27.500 3.500V22.500H0Z" fill="#ffd968" />
      <path d="M5 23.500V14Q5 12.500 6.500 12.500H21.500Q23 12.500 23 14V23.500H18.500V18H9.500V23.500Z" fill="#3a96dd" />
    </g>
  </Ic>
);
const StoreIcon = () => (
  <Ic w={30} h={30}>
    <path d="M8 10V2.500Q8 1.500 9 1.500H21Q22 1.500 22 2.500V10" stroke="#222" strokeWidth="2.800" />
    <path d="M0.500 8.500H29.500V28.500Q29.500 30 28 30H2Q0.500 30 0.500 28.500Z" fill="#2b2b2b" stroke="none" />
    <g stroke="none">
      <rect x="9.500" y="14" width="5.200" height="5.200" fill="#f25022" />
      <rect x="15.500" y="14" width="5.200" height="5.200" fill="#7fba00" />
      <rect x="9.500" y="20" width="5.200" height="5.200" fill="#00a4ef" />
      <rect x="15.500" y="20" width="5.200" height="5.200" fill="#ffb900" />
    </g>
  </Ic>
);
const MailIcon = () => (
  <Ic w={30} h={28}>
    <g stroke="none">
      <path d="M0 9L15 0L30 9V14H0Z" fill="#0a5cab" />
      <path d="M0 9V28H30V9L15 18Z" fill="#2195e0" />
      <path d="M30 9L14 18L30 28Z" fill="#3ccbf4" />
      <path d="M2 9.500H28L15 18Z" fill="#f5f5f5" />
    </g>
  </Ic>
);
const ChromeIcon = () => (
  <Ic w={28} h={28}>
    <g stroke="none">
      <circle cx="14" cy="14" r="14" fill="#ffcd40" />
      <path d="M14 14L1.900 7A14 14 0 0 1 26.100 7H14Z" fill="#dd4f3e" />
      <path d="M14 28A14 14 0 0 1 1.900 7L8 17.500L14 21L18 20Z" fill="#1aa260" />
      <circle cx="14" cy="14" r="6.500" fill="#fff" />
      <circle cx="14" cy="14" r="5.200" fill="#4a8af4" />
    </g>
  </Ic>
);
const OfficeIcon = () => (
  <Ic w={24} h={28}>
    <defs>
      <linearGradient id="officeLeft" x1="0" y1="0" x2="0" y2="1">
        <stop offset="0" stopColor="#b01212" /><stop offset="1" stopColor="#c85ab8" />
      </linearGradient>
      <linearGradient id="officeRight" x1="0" y1="0" x2="0" y2="1">
        <stop offset="0" stopColor="#f7930a" /><stop offset="0.500" stopColor="#d83b01" />
      </linearGradient>
    </defs>
    <g stroke="none">
      <path d="M1 6L13 0V6L7.500 8V19.500L3 22.500L0.500 21Z" fill="url(#officeLeft)" />
      <path d="M13 0L23.500 3V25L13 28Z" fill="url(#officeRight)" />
      <path d="M4 22.500H14V28H12Z" fill="#dc2050" />
    </g>
  </Ic>
);
const DiscordIcon = () => (
  <div className="relative flex h-[25px] w-[25px] items-center justify-center rounded-[3px] rounded-br-none bg-[#6c80c6]">
    <FaDiscord className="h-[18px] w-[18px] text-white" />
  </div>
);
const WordIcon = () => (
  <Ic w={30} h={28}>
    <g stroke="none">
      <path d="M6.500 1.500Q6.500 0 8 0H28Q29.500 0 29.500 1.500V7H6.500Z" fill="#41a5ee" />
      <path d="M6.500 7H29.500V14H6.500Z" fill="#2b7cd3" />
      <path d="M6.500 14H29.500V21H6.500Z" fill="#185abd" />
      <path d="M6.500 21H29.500V26.500Q29.500 28 28 28H8Q6.500 28 6.500 26.500Z" fill="#103f91" />
      <rect x="0" y="6.500" width="15.500" height="15.500" rx="1.500" fill="#1b5cbe" />
      <text x="2.200" y="18.500" fontSize="12" fontWeight="700" fontFamily="Open Sans" fill="#fff" textLength="11.500">W</text>
    </g>
  </Ic>
);
const EdgeIcon = () => (
  <Ic w={30} h={30}>
    <defs>
      <linearGradient id="edgeTop" x1="0" y1="0" x2="1" y2="0.400">
        <stop offset="0" stopColor="#2a9fe0" /><stop offset="0.500" stopColor="#2fc2c8" /><stop offset="1" stopColor="#66e356" />
      </linearGradient>
    </defs>
    <g stroke="none">
      <circle cx="15" cy="15" r="15" fill="#1279d4" />
      <path d="M0.500 12Q3 0 15 0Q29 1 30 13Q29.500 20 22 20Q17.500 20 17.500 17.500Q19.500 16 19 13Q17 8.500 11.500 8.500Q4 8.500 0.500 14Z" fill="url(#edgeTop)" />
      <path d="M10 17Q9 28.500 20.500 29.200Q25 27.500 28.500 22.500Q22 26 17 22Q13 19 15 13Q10.500 13.500 10 17Z" fill="#124f99" />
      <path d="M17.500 17.500Q19.500 15.500 18.500 12.800Q16 11.500 14 14.500Q13 18 16 21Q21 25 28.500 22L31 18L28 17.500Q26 20 22 20Q17.500 20 17.500 17.500Z" fill="#ecdada" />
    </g>
  </Ic>
);
const VisualStudioIcon = () => (
  <Ic w={30} h={30}>
    <g stroke="none">
      <path d="M3 7.800L22 23V29.500L21 30L3 17.500Z" fill="#8a4bd0" />
      <path d="M0 9L3 7.500L5 9.500V20L3 22.500L0 20.500Z" fill="#52218a" />
      <path d="M2.500 12.500L5.500 15L2.500 17.500Z" fill="#ecdada" />
      <path d="M3 22.500L22 7V0.500L21 0L3 13Z" fill="#7a3bc4" />
      <path d="M21 0L30 4V26L21 30Z" fill="#b179f1" />
      <path d="M21 9.500V20.500L14.500 15Z" fill="#ecdada" />
    </g>
  </Ic>
);
const GitHubIcon = () => (
  <div className="flex h-7 w-7 items-center justify-center rounded-full bg-[#6f3198]">
    <FaGithub className="h-[23px] w-[23px] shrink-0 text-white" />
  </div>
);
const CodeIcon = () => (
  <Ic w={30} h={30}>
    <g stroke="none">
      <path d="M0.500 10.500L2.500 8.500L5 8.700L22.500 23V30L20.500 29.500L0.500 12Z" fill="#0065a9" />
      <path d="M0.500 19.500L2.500 21.500L5 21.300L22.500 7V0L20.500 0.500L0.500 18Z" fill="#007acc" />
      <path d="M21.500 0L30 4V26L21.500 30Z" fill="#1f9cf0" />
    </g>
  </Ic>
);
const BraveIcon = () => (
  <div className="relative flex h-[30px] w-[30px] items-center justify-center">
    <Ic w={18} h={22} className="absolute">
      <path d="M1 3H17L18 14L9 21L0 14Z" fill="#fff" stroke="none" />
    </Ic>
    <SiBrave className="relative h-[30px] w-[30px] text-[#fb4018]" />
  </div>
);
const CreativeCloudIcon = () => (
  <div className="flex h-7 w-7 items-center justify-center rounded-[5px] bg-[conic-gradient(from_45deg,#ff9a00,#b8d430_25%,#2fc4b2_40%,#3e8df0_55%,#c03ee0_70%,#ff0f6b_82%,#ff1010_92%,#ff9a00)]">
    <Ic w={21} h={15}>
      <path d="M10 10.500L7.500 8Q5.500 6 3.500 7.500Q1 9.500 3 12Q4.500 13.700 7 13.700H14Q20 13 20 7.500Q19.500 1.500 13.500 1.200Q8 1.500 7 6.500M10 10.500Q12.500 12 15 10.500Q18 7.500 15.500 5Q12.500 3.200 10.500 6L13 8.500" stroke="#fff" strokeWidth="1.700" />
    </Ic>
  </div>
);
const SwirlIcon = () => (
  <Ic w={28} h={28}>
    <g stroke="none">
      <path d="M14 0A14 14 0 0 1 28 14Q28 21 22 23Q17 24 14 20Q19 19 18.500 13Q18 9 14 9Q17 3 14 0Z" fill="#0f9d28" />
      <path d="M28 14A14 14 0 0 1 14 28Q7 28 5 22Q4 17 8 14Q10 19 15 18.500Q19 18 19 14Q25 17 28 14Z" fill="#fbbc05" />
      <path d="M14 28A14 14 0 0 1 0 14Q0 7 6 5Q11 4 14 8Q9 10 9.500 15Q10 19 14 19Q11 25 14 28Z" fill="#f1352b" />
      <path d="M0.500 11A14 14 0 0 1 14 0Q21 0 23 6Q24 11 20 14Q18 9 13 9.500Q9 10 9 14Q3 13 0.500 11Z" fill="#3a80f2" />
      <path d="M17 0.400A14 14 0 0 1 28 14Q28 21 22 23Q17 24 14.500 19.500Q20 18 20 13Q22 6 17 0.400Z" fill="#0f9d28" />
    </g>
  </Ic>
);

const apps: { id: string; icon: React.ReactNode; state?: "open" | "active" }[] = [
  {
    id: "cortana",
    icon: <Ic w={20} h={20}><circle cx="10" cy="10" r="8.300" stroke="#000" strokeWidth="2.800" /></Ic>,
  },
  {
    id: "task-view",
    icon: (
      <Ic w={20} h={19} className="-ml-1">
        <path d="M1 0V3H13V0M1 6H13V14.500H1ZM1 19V16.500H13V19M18.500 0V5M18.500 10V19" stroke="#000" strokeWidth="1.200" />
        <path d="M17 6h3v3h-3z" fill="#000" stroke="none" />
      </Ic>
    ),
  },
  { id: "explorer", icon: <ExplorerIcon />, state: "open" },
  { id: "store", icon: <StoreIcon /> },
  { id: "mail", icon: <MailIcon /> },
  { id: "chrome", icon: <ChromeIcon /> },
  { id: "office", icon: <OfficeIcon /> },
  { id: "discord", icon: <DiscordIcon /> },
  { id: "word", icon: <WordIcon />, state: "active" },
  { id: "edge", icon: <EdgeIcon /> },
  { id: "visual-studio", icon: <VisualStudioIcon /> },
  { id: "github", icon: <GitHubIcon />, state: "open" },
  { id: "code", icon: <CodeIcon />, state: "open" },
  { id: "brave", icon: <BraveIcon />, state: "open" },
  { id: "creative-cloud", icon: <CreativeCloudIcon />, state: "open" },
  { id: "swirl", icon: <SwirlIcon />, state: "open" },
];

function Taskbar() {
  return (
    <div className="flex h-[50px] shrink-0 bg-[linear-gradient(to_right,#e9dccf,#e9d6d6_490px,#ecdada_1100px,#ead6d8)]">
      <Cell className="w-[60px] pl-5">
        <Ic w={20} h={20}>
          <path d="M0 2.800L8.500 1.500V9.300H0ZM9.500 1.300L20 0V9.300H9.500ZM0 10.500H8.500V18.300L0 17.200ZM9.500 10.500H20V20L9.500 18.600Z" fill="#000" stroke="none" />
        </Ic>
      </Cell>
      <div className="flex h-[50px] w-[430px] shrink-0 items-center border border-[#c9c4c4] bg-white pl-[14px] text-[#2b2b2b]">
        <Ic w={20} h={20}>
          <circle cx="13" cy="7" r="6.300" stroke="#111" strokeWidth="1.400" />
          <path d="M8.500 11.500L0.500 19.500" stroke="#111" strokeWidth="1.400" />
        </Ic>
        <T w={164} className="ml-[15px] text-[18px]">Type here to search</T>
      </div>
      <div className="-ml-px flex">
        {apps.map((a) => (
          <div
            key={a.id}
            className={`flex w-[62px] shrink-0 flex-col items-center ${a.state === "active" ? "bg-[#f6f0ef]" : ""}`}
          >
            <div className="flex h-[47px] items-center pt-[3px]">{a.icon}</div>
            {a.state === "open" && <div className="h-[3px] w-[51px] bg-[#0078d7]" />}
            {a.state === "active" && <div className="h-[3px] w-full bg-[#0078d7]" />}
          </div>
        ))}
      </div>
      <div className="ml-[146px] flex items-center">
        <Ic w={16} h={9}><path d="M0.500 8.500L8 1L15.500 8.500" stroke="#111" strokeWidth="1.500" /></Ic>
        <Ic w={20} h={14} className="ml-3">
          <path d="M5 13.300Q0.700 13 0.700 9.500Q1 6 4.500 6Q5.500 0.700 10 0.700Q14 0.700 15 4.800Q19.300 5 19.300 9.200Q19 13 15.500 13.300Z" fill="#e8e8e8" stroke="#222" />
          <path d="M4.500 6Q5.500 1.500 10 1.500Q14 1.500 15 5L6 9.500Z" fill="#8e8a8a" stroke="none" />
        </Ic>
        <Ic w={20} h={14} className="ml-[10px]">
          <rect x="4.500" y="4.500" width="14" height="8" stroke="#000" />
          <path d="M6 6h11v5h-11zM18.500 7h1.500v3h-1.500z" fill="#000" stroke="none" />
          <path d="M1.500 0V2M4 0V2M0.500 2.500H5V5Q2.700 7 0.500 5ZM2.700 6V11" stroke="#000" strokeWidth="1.100" />
        </Ic>
        <Ic w={20} h={18} className="ml-[10px]">
          <path d="M0.700 6V12H3.500L7.500 15.500V2.500L3.500 6Z" stroke="#000" strokeWidth="1.200" />
          <path d="M10.500 7Q12 9 10.500 11" stroke="#000" strokeWidth="1.300" />
          <path d="M13 4.500Q16 9 13 13.500M15.800 2Q20.500 9 15.800 16" stroke="#999090" strokeWidth="1.200" />
        </Ic>
        <FaDropbox className="ml-[10px] h-[19px] w-[19px] text-black" />
      </div>
      <div className="ml-[3px] flex w-[90px] flex-col items-center pt-[2px] text-[14px] leading-[23px] text-[#111]">
        <T w={54}>9:29 AM</T>
        <T w={60}>4/3/2021</T>
      </div>
      <div className="relative ml-[12px] w-[45px] border-r border-[#bfb2b2]">
        <Ic w={20} h={20} className="mt-[15px]">
          <path d="M0 0H20V17H10L7 20V17H0Z" fill="#000" stroke="none" />
          <path d="M4 4.500H16M4 8.500H16M4 12.500H16" stroke="#ecdada" strokeWidth="1.200" />
        </Ic>
        <div className="absolute left-[7px] top-[22px] flex h-[24px] w-[24px] items-center justify-center rounded-full border border-[#777] bg-[#d9d0d0]/90 text-[13px] font-semibold text-black">
          25
        </div>
      </div>
    </div>
  );
}

export default function App() {
  return (
    <div className="flex h-[1080px] w-[1920px] flex-col overflow-hidden bg-[#f3f2f1] font-['Open_Sans','Noto_Sans',sans-serif]">
      <TitleBar />
      <Tabs />
      <Ribbon />
      <main className="flex h-[803px] shrink-0 overflow-hidden bg-[#e6e6e6] bg-[linear-gradient(to_bottom,#cfcfcf,#e6e6e6_9px)]">
        <NavigationPane />
        <VerticalRuler />
        <div className="w-[1435px] shrink-0">
          <HorizontalRuler />
          <Page />
        </div>
        <ScrollBar />
      </main>
      <StatusBar />
      <Taskbar />
    </div>
  );
}
